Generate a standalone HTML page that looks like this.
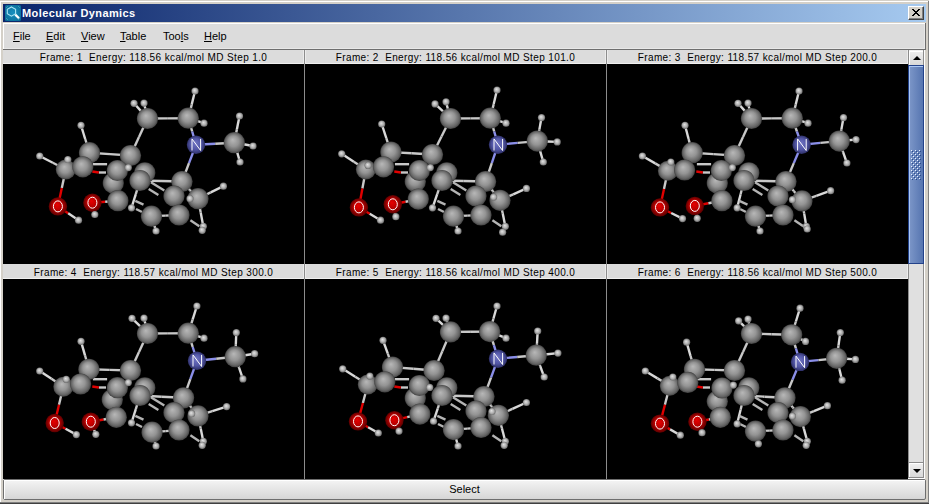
<!DOCTYPE html>
<html><head><meta charset="utf-8"><style>
html,body{margin:0;padding:0;width:929px;height:504px;overflow:hidden;position:relative;background:#d4d0c8}
svg{display:block}
</style></head><body>
<svg width="0" height="0" style="position:absolute"><defs>
<radialGradient id="gC" cx="0.5" cy="0.5" r="0.5" fx="0.42" fy="0.36">
<stop offset="0" stop-color="#b8b8b8"/><stop offset="0.5" stop-color="#949494"/><stop offset="0.85" stop-color="#646464"/><stop offset="1" stop-color="#404040"/></radialGradient>
<radialGradient id="gH" cx="0.5" cy="0.5" r="0.5" fx="0.42" fy="0.38">
<stop offset="0" stop-color="#e4e4e4"/><stop offset="0.6" stop-color="#b0b0b0"/><stop offset="1" stop-color="#6c6c6c"/></radialGradient>
<radialGradient id="gN" cx="0.5" cy="0.5" r="0.5" fx="0.45" fy="0.4">
<stop offset="0" stop-color="#7276c4"/><stop offset="0.6" stop-color="#5256a6"/><stop offset="1" stop-color="#2e3068"/></radialGradient>
<radialGradient id="gO" cx="0.5" cy="0.5" r="0.5" fx="0.45" fy="0.4">
<stop offset="0" stop-color="#e80000"/><stop offset="0.55" stop-color="#b80000"/><stop offset="1" stop-color="#5a0000"/></radialGradient>
</defs></svg>
<div style="position:absolute;left:0px;top:0px;width:929px;height:504px;background:#d4d0c8;"></div>
<div style="position:absolute;left:0px;top:1px;width:928px;height:1px;background:#fff;"></div>
<div style="position:absolute;left:0px;top:1px;width:1px;height:501px;background:#fff;"></div>
<div style="position:absolute;left:928px;top:1px;width:1px;height:503px;background:#808080;"></div>
<div style="position:absolute;left:0px;top:502px;width:929px;height:1px;background:#808080;"></div>
<div style="position:absolute;left:0px;top:503px;width:929px;height:1px;background:#404040;"></div>
<div style="position:absolute;left:3px;top:4px;width:923px;height:18px;background:linear-gradient(to right,#0a246a,#a6caf0);"></div>
<div style="position:absolute;left:22px;top:4px;height:18px;font:bold 11px 'Liberation Sans',sans-serif;letter-spacing:0.4px;line-height:18px;color:#fff;white-space:pre">Molecular Dynamics</div>
<svg style="position:absolute;left:5px;top:5px" width="16" height="16" viewBox="0 0 16 16">
<defs><radialGradient id="gI" cx="0.5" cy="0.5" r="0.6"><stop offset="0" stop-color="#1790c0"/><stop offset="1" stop-color="#0a6e98"/></radialGradient></defs>
<rect x="0" y="0" width="16" height="16" rx="1.5" fill="url(#gI)"/>
<path d="M1.5 2.5l1-1M13.5 1.5l1 1M1.5 13.5l1 1M13.5 14.5l1-1" stroke="#6cc4dc" stroke-width="0.9"/>
<path d="M6.45 1.9 L10.6 4.3 L10.6 8.8 L6.45 11.2 L2.3 8.8 L2.3 4.3 Z" fill="none" stroke="#a8e4f4" stroke-width="1.1"/>
<path d="M10.3 9.6 L14 13.3" stroke="#fff" stroke-width="2.2"/>
</svg>
<div style="position:absolute;left:908px;top:6px;width:16px;height:14px;background:#d4d0c8;box-sizing:border-box;border-top:1px solid #fff;border-left:1px solid #fff;border-right:1px solid #404040;border-bottom:1px solid #404040"></div>
<div style="position:absolute;left:909px;top:7px;width:14px;height:12px;box-sizing:border-box;border-right:1px solid #808080;border-bottom:1px solid #808080"></div>
<svg style="position:absolute;left:912px;top:9px" width="8" height="7" viewBox="0 0 8 7" shape-rendering="crispEdges" fill="#000"><rect x="0" y="0" width="1" height="1"/><rect x="1" y="0" width="1" height="1"/><rect x="6" y="0" width="1" height="1"/><rect x="7" y="0" width="1" height="1"/><rect x="1" y="1" width="1" height="1"/><rect x="2" y="1" width="1" height="1"/><rect x="5" y="1" width="1" height="1"/><rect x="6" y="1" width="1" height="1"/><rect x="2" y="2" width="1" height="1"/><rect x="3" y="2" width="1" height="1"/><rect x="4" y="2" width="1" height="1"/><rect x="5" y="2" width="1" height="1"/><rect x="3" y="3" width="1" height="1"/><rect x="4" y="3" width="1" height="1"/><rect x="2" y="4" width="1" height="1"/><rect x="3" y="4" width="1" height="1"/><rect x="4" y="4" width="1" height="1"/><rect x="5" y="4" width="1" height="1"/><rect x="1" y="5" width="1" height="1"/><rect x="2" y="5" width="1" height="1"/><rect x="5" y="5" width="1" height="1"/><rect x="6" y="5" width="1" height="1"/><rect x="0" y="6" width="1" height="1"/><rect x="1" y="6" width="1" height="1"/><rect x="6" y="6" width="1" height="1"/><rect x="7" y="6" width="1" height="1"/></svg>
<div style="position:absolute;left:3px;top:23px;width:923px;height:27px;background:#dcdcdc;"></div>
<div style="position:absolute;left:3px;top:23px;width:922px;height:1px;background:#fff;"></div>
<div style="position:absolute;left:3px;top:23px;width:1px;height:26px;background:#fff;"></div>
<div style="position:absolute;left:4px;top:48px;width:921px;height:1px;background:#e8e8e8;"></div>
<div style="position:absolute;left:924px;top:24px;width:1px;height:25px;background:#e8e8e8;"></div>
<div style="position:absolute;left:925px;top:23px;width:1px;height:27px;background:#6e6e6e;"></div>
<div style="position:absolute;left:3px;top:49px;width:923px;height:1px;background:#6e6e6e;"></div>
<div style="position:absolute;left:13px;top:30px;height:13px;font:11px 'Liberation Sans',sans-serif;line-height:13px;color:#000;white-space:pre"><u>F</u>ile</div>
<div style="position:absolute;left:46px;top:30px;height:13px;font:11px 'Liberation Sans',sans-serif;line-height:13px;color:#000;white-space:pre"><u>E</u>dit</div>
<div style="position:absolute;left:81px;top:30px;height:13px;font:11px 'Liberation Sans',sans-serif;line-height:13px;color:#000;white-space:pre"><u>V</u>iew</div>
<div style="position:absolute;left:120px;top:30px;height:13px;font:11px 'Liberation Sans',sans-serif;line-height:13px;color:#000;white-space:pre"><u>T</u>able</div>
<div style="position:absolute;left:163px;top:30px;height:13px;font:11px 'Liberation Sans',sans-serif;line-height:13px;color:#000;white-space:pre">Too<u>l</u>s</div>
<div style="position:absolute;left:204px;top:30px;height:13px;font:11px 'Liberation Sans',sans-serif;line-height:13px;color:#000;white-space:pre"><u>H</u>elp</div>
<div style="position:absolute;left:3px;top:50px;width:922px;height:450px;background:#dcdcdc;"></div>
<div style="position:absolute;left:3px;top:64px;width:301px;height:200px;background:#000;"></div>
<div style="position:absolute;left:3px;top:51px;width:301px;height:14px;text-align:center;font:10px 'Liberation Sans',sans-serif;letter-spacing:0.38px;color:#000;white-space:pre;line-height:14px">Frame: 1  Energy: 118.56 kcal/mol MD Step 1.0</div>
<svg style="position:absolute;left:3px;top:64px" width="301" height="200" viewBox="0 0 301 200" stroke-width="2.4"><line x1="144.5" y1="54.5" x2="164.9" y2="54.4" stroke="#c8c8c8"/>
<line x1="164.9" y1="54.4" x2="185.3" y2="54.2" stroke="#c8c8c8"/>
<line x1="144.5" y1="54.5" x2="137.8" y2="46.9" stroke="#c8c8c8"/>
<line x1="137.8" y1="46.9" x2="131.0" y2="39.3" stroke="#d8d8d8"/>
<line x1="144.5" y1="54.5" x2="142.8" y2="46.8" stroke="#c8c8c8"/>
<line x1="142.8" y1="46.8" x2="141.0" y2="39.1" stroke="#d8d8d8"/>
<line x1="185.3" y1="54.2" x2="188.7" y2="40.6" stroke="#c8c8c8"/>
<line x1="188.7" y1="40.6" x2="192.0" y2="27.0" stroke="#d8d8d8"/>
<line x1="185.3" y1="54.2" x2="193.2" y2="56.7" stroke="#c8c8c8"/>
<line x1="193.2" y1="56.7" x2="201.0" y2="59.2" stroke="#d8d8d8"/>
<line x1="185.3" y1="54.2" x2="189.2" y2="67.5" stroke="#c8c8c8"/>
<line x1="189.2" y1="67.5" x2="193.0" y2="80.7" stroke="#8a8ee8"/>
<line x1="193.0" y1="80.7" x2="212.2" y2="79.7" stroke="#8a8ee8"/>
<line x1="212.2" y1="79.7" x2="231.3" y2="78.7" stroke="#c8c8c8"/>
<line x1="231.3" y1="78.7" x2="233.9" y2="65.3" stroke="#c8c8c8"/>
<line x1="233.9" y1="65.3" x2="236.5" y2="52.0" stroke="#d8d8d8"/>
<line x1="231.3" y1="78.7" x2="240.7" y2="80.3" stroke="#c8c8c8"/>
<line x1="240.7" y1="80.3" x2="250.0" y2="82.0" stroke="#d8d8d8"/>
<line x1="231.3" y1="78.7" x2="234.2" y2="88.3" stroke="#c8c8c8"/>
<line x1="234.2" y1="88.3" x2="237.0" y2="98.0" stroke="#d8d8d8"/>
<line x1="144.5" y1="54.5" x2="136.0" y2="73.0" stroke="#c8c8c8"/>
<line x1="136.0" y1="73.0" x2="127.5" y2="91.5" stroke="#c8c8c8"/>
<line x1="193.0" y1="80.7" x2="186.0" y2="99.1" stroke="#8a8ee8"/>
<line x1="186.0" y1="99.1" x2="179.0" y2="117.5" stroke="#c8c8c8"/>
<line x1="179.0" y1="117.5" x2="158.0" y2="117.0" stroke="#c8c8c8"/>
<line x1="158.0" y1="117.0" x2="137.0" y2="116.5" stroke="#c8c8c8"/>
<line x1="179.0" y1="117.5" x2="187.0" y2="126.1" stroke="#c8c8c8"/>
<line x1="187.0" y1="126.1" x2="195.0" y2="134.7" stroke="#c8c8c8"/>
<line x1="195.0" y1="134.7" x2="207.7" y2="128.4" stroke="#c8c8c8"/>
<line x1="207.7" y1="128.4" x2="220.4" y2="122.2" stroke="#d8d8d8"/>
<line x1="195.0" y1="134.7" x2="197.7" y2="148.5" stroke="#c8c8c8"/>
<line x1="197.7" y1="148.5" x2="200.3" y2="162.3" stroke="#d8d8d8"/>
<line x1="148.5" y1="152.2" x2="162.2" y2="151.6" stroke="#c8c8c8"/>
<line x1="162.2" y1="151.6" x2="176.0" y2="151.0" stroke="#c8c8c8"/>
<line x1="148.5" y1="152.2" x2="150.8" y2="159.6" stroke="#c8c8c8"/>
<line x1="150.8" y1="159.6" x2="153.0" y2="167.0" stroke="#d8d8d8"/>
<line x1="86.5" y1="88.7" x2="82.2" y2="75.0" stroke="#c8c8c8"/>
<line x1="82.2" y1="75.0" x2="78.0" y2="61.3" stroke="#d8d8d8"/>
<line x1="86.5" y1="88.7" x2="107.0" y2="90.1" stroke="#c8c8c8"/>
<line x1="107.0" y1="90.1" x2="127.5" y2="91.5" stroke="#c8c8c8"/>
<line x1="62.8" y1="105.5" x2="49.8" y2="98.8" stroke="#c8c8c8"/>
<line x1="49.8" y1="98.8" x2="36.7" y2="92.0" stroke="#d8d8d8"/>
<line x1="62.8" y1="105.5" x2="58.8" y2="124.0" stroke="#c8c8c8"/>
<line x1="58.8" y1="124.0" x2="54.9" y2="142.4" stroke="#e00000"/>
<line x1="54.9" y1="142.4" x2="65.2" y2="149.3" stroke="#e00000"/>
<line x1="65.2" y1="149.3" x2="75.5" y2="156.2" stroke="#d8d8d8"/>
<line x1="89.4" y1="138.7" x2="102.2" y2="137.7" stroke="#e00000"/>
<line x1="102.2" y1="137.7" x2="114.9" y2="136.7" stroke="#c8c8c8"/>
<line x1="89.4" y1="138.7" x2="90.6" y2="144.6" stroke="#e00000"/>
<line x1="90.6" y1="144.6" x2="91.8" y2="150.5" stroke="#d8d8d8"/>
<line x1="62.8" y1="105.5" x2="71.3" y2="104.2" stroke="#c8c8c8"/>
<line x1="71.3" y1="104.2" x2="79.8" y2="102.8" stroke="#c8c8c8"/>
<line x1="128.5" y1="143.8" x2="132.8" y2="130.2" stroke="#d8d8d8"/>
<line x1="132.8" y1="130.2" x2="137.0" y2="116.5" stroke="#c8c8c8"/>
<line x1="195.0" y1="134.7" x2="191.0" y2="134.7" stroke="#c8c8c8"/>
<line x1="191.0" y1="134.7" x2="187.0" y2="134.7" stroke="#d8d8d8"/>
<line x1="147.9" y1="118.3" x2="161.3" y2="126.5" stroke="#b4b4b4"/>
<line x1="145.7" y1="125.0" x2="155.4" y2="131.0" stroke="#b4b4b4"/>
<line x1="132.3" y1="136.9" x2="140.5" y2="140.6" stroke="#b4b4b4"/>
<line x1="133.0" y1="145.0" x2="139.0" y2="148.0" stroke="#b4b4b4"/>
<line x1="187.4" y1="156.3" x2="196.3" y2="162.2" stroke="#b4b4b4"/>
<line x1="89.9" y1="100.2" x2="104.1" y2="100.2" stroke="#c8c8c8"/>
<line x1="95.8" y1="108.5" x2="103.0" y2="108.5" stroke="#c8c8c8"/>
<line x1="89.3" y1="107.5" x2="95.8" y2="108.5" stroke="#e00000"/>
<circle cx="144.5" cy="54.5" r="10.6" fill="url(#gC)"/>
<circle cx="185.3" cy="54.2" r="10.6" fill="url(#gC)"/>
<circle cx="231.3" cy="78.7" r="10.6" fill="url(#gC)"/>
<circle cx="193.0" cy="80.7" r="9.2" fill="url(#gN)"/>
<path d="M189.0 86.5V74.9L197.6 86.5V74.9" fill="none" stroke="#fff" stroke-width="1"/>
<circle cx="86.5" cy="88.7" r="10.6" fill="url(#gC)"/>
<circle cx="127.5" cy="91.5" r="10.6" fill="url(#gC)"/>
<circle cx="131.0" cy="39.3" r="3.6" fill="url(#gH)"/>
<circle cx="141.0" cy="39.1" r="3.6" fill="url(#gH)"/>
<circle cx="192.0" cy="27.0" r="3.6" fill="url(#gH)"/>
<circle cx="201.0" cy="59.2" r="3.6" fill="url(#gH)"/>
<circle cx="236.5" cy="52.0" r="3.6" fill="url(#gH)"/>
<circle cx="250.0" cy="82.0" r="3.6" fill="url(#gH)"/>
<circle cx="237.0" cy="98.0" r="3.6" fill="url(#gH)"/>
<circle cx="78.0" cy="61.3" r="3.6" fill="url(#gH)"/>
<circle cx="62.8" cy="105.5" r="10" fill="url(#gC)"/>
<circle cx="79.8" cy="102.8" r="10.6" fill="url(#gC)"/>
<circle cx="36.7" cy="92.0" r="3.6" fill="url(#gH)"/>
<circle cx="64.8" cy="95.5" r="3.6" fill="url(#gH)"/>
<circle cx="141.8" cy="108.8" r="10.6" fill="url(#gC)"/>
<circle cx="110.3" cy="119.0" r="10.6" fill="url(#gC)"/>
<circle cx="114.4" cy="106.5" r="10.6" fill="url(#gC)"/>
<circle cx="125.3" cy="103.6" r="3.6" fill="url(#gH)"/>
<circle cx="137.0" cy="116.5" r="10.6" fill="url(#gC)"/>
<circle cx="195.0" cy="134.7" r="10.6" fill="url(#gC)"/>
<circle cx="179.0" cy="117.5" r="10.6" fill="url(#gC)"/>
<circle cx="171.0" cy="132.0" r="10.6" fill="url(#gC)"/>
<circle cx="187.0" cy="134.7" r="3.6" fill="url(#gH)"/>
<circle cx="220.4" cy="122.2" r="3.6" fill="url(#gH)"/>
<circle cx="114.9" cy="136.7" r="10.6" fill="url(#gC)"/>
<circle cx="54.9" cy="142.4" r="9.2" fill="url(#gO)"/>
<ellipse cx="54.9" cy="142.4" rx="4.5" ry="5.5" fill="none" stroke="#fff" stroke-width="1"/>
<circle cx="89.4" cy="138.7" r="9.2" fill="url(#gO)"/>
<ellipse cx="89.4" cy="138.7" rx="4.5" ry="5.5" fill="none" stroke="#fff" stroke-width="1"/>
<circle cx="75.5" cy="156.2" r="3.6" fill="url(#gH)"/>
<circle cx="91.8" cy="150.5" r="3.6" fill="url(#gH)"/>
<circle cx="128.5" cy="143.8" r="3.6" fill="url(#gH)"/>
<circle cx="148.5" cy="152.2" r="10.6" fill="url(#gC)"/>
<circle cx="176.0" cy="151.0" r="10.6" fill="url(#gC)"/>
<circle cx="153.0" cy="167.0" r="3.6" fill="url(#gH)"/>
<circle cx="200.3" cy="162.3" r="3.6" fill="url(#gH)"/>
<circle cx="199.2" cy="166.3" r="3.6" fill="url(#gH)"/></svg>
<div style="position:absolute;left:305px;top:64px;width:301px;height:200px;background:#000;"></div>
<div style="position:absolute;left:305px;top:51px;width:301px;height:14px;text-align:center;font:10px 'Liberation Sans',sans-serif;letter-spacing:0.38px;color:#000;white-space:pre;line-height:14px">Frame: 2  Energy: 118.56 kcal/mol MD Step 101.0</div>
<svg style="position:absolute;left:305px;top:64px" width="301" height="200" viewBox="0 0 301 200" stroke-width="2.4"><line x1="145.5" y1="54.5" x2="165.4" y2="54.4" stroke="#c8c8c8"/>
<line x1="165.4" y1="54.4" x2="185.3" y2="54.2" stroke="#c8c8c8"/>
<line x1="145.5" y1="54.5" x2="137.8" y2="47.2" stroke="#c8c8c8"/>
<line x1="137.8" y1="47.2" x2="130.0" y2="39.9" stroke="#d8d8d8"/>
<line x1="145.5" y1="54.5" x2="143.2" y2="46.2" stroke="#c8c8c8"/>
<line x1="143.2" y1="46.2" x2="141.0" y2="37.8" stroke="#d8d8d8"/>
<line x1="185.3" y1="54.2" x2="188.7" y2="40.1" stroke="#c8c8c8"/>
<line x1="188.7" y1="40.1" x2="192.0" y2="26.0" stroke="#d8d8d8"/>
<line x1="185.3" y1="54.2" x2="193.2" y2="56.7" stroke="#c8c8c8"/>
<line x1="193.2" y1="56.7" x2="201.0" y2="59.2" stroke="#d8d8d8"/>
<line x1="185.3" y1="54.2" x2="189.2" y2="67.5" stroke="#c8c8c8"/>
<line x1="189.2" y1="67.5" x2="193.0" y2="80.7" stroke="#8a8ee8"/>
<line x1="193.0" y1="80.7" x2="212.7" y2="78.9" stroke="#8a8ee8"/>
<line x1="212.7" y1="78.9" x2="232.3" y2="77.1" stroke="#c8c8c8"/>
<line x1="232.3" y1="77.1" x2="234.4" y2="65.4" stroke="#c8c8c8"/>
<line x1="234.4" y1="65.4" x2="236.5" y2="53.6" stroke="#d8d8d8"/>
<line x1="232.3" y1="77.1" x2="242.2" y2="77.5" stroke="#c8c8c8"/>
<line x1="242.2" y1="77.5" x2="252.2" y2="77.9" stroke="#d8d8d8"/>
<line x1="232.3" y1="77.1" x2="235.3" y2="87.6" stroke="#c8c8c8"/>
<line x1="235.3" y1="87.6" x2="238.3" y2="98.0" stroke="#d8d8d8"/>
<line x1="145.5" y1="54.5" x2="136.5" y2="72.5" stroke="#c8c8c8"/>
<line x1="136.5" y1="72.5" x2="127.5" y2="90.5" stroke="#c8c8c8"/>
<line x1="193.0" y1="80.7" x2="186.8" y2="99.1" stroke="#8a8ee8"/>
<line x1="186.8" y1="99.1" x2="180.6" y2="117.5" stroke="#c8c8c8"/>
<line x1="180.6" y1="117.5" x2="158.8" y2="117.0" stroke="#c8c8c8"/>
<line x1="158.8" y1="117.0" x2="137.0" y2="116.5" stroke="#c8c8c8"/>
<line x1="180.6" y1="117.5" x2="187.8" y2="126.9" stroke="#c8c8c8"/>
<line x1="187.8" y1="126.9" x2="195.0" y2="136.3" stroke="#c8c8c8"/>
<line x1="195.0" y1="136.3" x2="208.2" y2="130.3" stroke="#c8c8c8"/>
<line x1="208.2" y1="130.3" x2="221.4" y2="124.4" stroke="#d8d8d8"/>
<line x1="195.0" y1="136.3" x2="197.7" y2="149.3" stroke="#c8c8c8"/>
<line x1="197.7" y1="149.3" x2="200.3" y2="162.3" stroke="#d8d8d8"/>
<line x1="148.5" y1="152.2" x2="162.2" y2="151.6" stroke="#c8c8c8"/>
<line x1="162.2" y1="151.6" x2="176.0" y2="151.0" stroke="#c8c8c8"/>
<line x1="148.5" y1="152.2" x2="150.8" y2="159.6" stroke="#c8c8c8"/>
<line x1="150.8" y1="159.6" x2="153.0" y2="167.0" stroke="#d8d8d8"/>
<line x1="85.9" y1="88.1" x2="81.3" y2="74.1" stroke="#c8c8c8"/>
<line x1="81.3" y1="74.1" x2="76.7" y2="60.0" stroke="#d8d8d8"/>
<line x1="85.9" y1="88.1" x2="106.7" y2="89.3" stroke="#c8c8c8"/>
<line x1="106.7" y1="89.3" x2="127.5" y2="90.5" stroke="#c8c8c8"/>
<line x1="60.9" y1="105.5" x2="48.8" y2="97.7" stroke="#c8c8c8"/>
<line x1="48.8" y1="97.7" x2="36.7" y2="89.8" stroke="#d8d8d8"/>
<line x1="60.9" y1="105.5" x2="57.4" y2="124.5" stroke="#c8c8c8"/>
<line x1="57.4" y1="124.5" x2="53.9" y2="143.4" stroke="#e00000"/>
<line x1="53.9" y1="143.4" x2="64.7" y2="149.8" stroke="#e00000"/>
<line x1="64.7" y1="149.8" x2="75.5" y2="156.2" stroke="#d8d8d8"/>
<line x1="87.8" y1="140.3" x2="100.6" y2="137.7" stroke="#e00000"/>
<line x1="100.6" y1="137.7" x2="113.3" y2="135.1" stroke="#c8c8c8"/>
<line x1="87.8" y1="140.3" x2="89.3" y2="146.5" stroke="#e00000"/>
<line x1="89.3" y1="146.5" x2="90.8" y2="152.7" stroke="#d8d8d8"/>
<line x1="60.9" y1="105.5" x2="69.7" y2="104.2" stroke="#c8c8c8"/>
<line x1="69.7" y1="104.2" x2="78.5" y2="102.8" stroke="#c8c8c8"/>
<line x1="127.5" y1="143.8" x2="132.2" y2="130.2" stroke="#d8d8d8"/>
<line x1="132.2" y1="130.2" x2="137.0" y2="116.5" stroke="#c8c8c8"/>
<line x1="195.0" y1="136.3" x2="191.8" y2="134.7" stroke="#c8c8c8"/>
<line x1="191.8" y1="134.7" x2="188.6" y2="133.1" stroke="#d8d8d8"/>
<line x1="147.9" y1="118.3" x2="161.3" y2="126.5" stroke="#b4b4b4"/>
<line x1="145.7" y1="125.0" x2="155.4" y2="131.0" stroke="#b4b4b4"/>
<line x1="132.3" y1="136.9" x2="140.5" y2="140.6" stroke="#b4b4b4"/>
<line x1="133.0" y1="145.0" x2="139.0" y2="148.0" stroke="#b4b4b4"/>
<line x1="187.4" y1="156.3" x2="196.3" y2="162.2" stroke="#b4b4b4"/>
<line x1="89.9" y1="100.2" x2="104.1" y2="100.2" stroke="#c8c8c8"/>
<line x1="95.8" y1="108.5" x2="103.0" y2="108.5" stroke="#c8c8c8"/>
<line x1="89.3" y1="107.5" x2="95.8" y2="108.5" stroke="#e00000"/>
<circle cx="145.5" cy="54.5" r="10.6" fill="url(#gC)"/>
<circle cx="185.3" cy="54.2" r="10.6" fill="url(#gC)"/>
<circle cx="232.3" cy="77.1" r="10.6" fill="url(#gC)"/>
<circle cx="193.0" cy="80.7" r="9.2" fill="url(#gN)"/>
<path d="M189.0 86.5V74.9L197.6 86.5V74.9" fill="none" stroke="#fff" stroke-width="1"/>
<circle cx="85.9" cy="88.1" r="10.6" fill="url(#gC)"/>
<circle cx="127.5" cy="90.5" r="10.6" fill="url(#gC)"/>
<circle cx="130.0" cy="39.9" r="3.6" fill="url(#gH)"/>
<circle cx="141.0" cy="37.8" r="3.6" fill="url(#gH)"/>
<circle cx="192.0" cy="26.0" r="3.6" fill="url(#gH)"/>
<circle cx="201.0" cy="59.2" r="3.6" fill="url(#gH)"/>
<circle cx="236.5" cy="53.6" r="3.6" fill="url(#gH)"/>
<circle cx="252.2" cy="77.9" r="3.6" fill="url(#gH)"/>
<circle cx="238.3" cy="98.0" r="3.6" fill="url(#gH)"/>
<circle cx="76.7" cy="60.0" r="3.6" fill="url(#gH)"/>
<circle cx="60.9" cy="105.5" r="10" fill="url(#gC)"/>
<circle cx="78.5" cy="102.8" r="10.6" fill="url(#gC)"/>
<circle cx="36.7" cy="89.8" r="3.6" fill="url(#gH)"/>
<circle cx="63.1" cy="101.4" r="3.6" fill="url(#gH)"/>
<circle cx="141.8" cy="108.8" r="10.6" fill="url(#gC)"/>
<circle cx="110.3" cy="117.4" r="10.6" fill="url(#gC)"/>
<circle cx="114.4" cy="106.5" r="10.6" fill="url(#gC)"/>
<circle cx="125.3" cy="103.6" r="3.6" fill="url(#gH)"/>
<circle cx="137.0" cy="116.5" r="10.6" fill="url(#gC)"/>
<circle cx="195.0" cy="136.3" r="10.6" fill="url(#gC)"/>
<circle cx="180.6" cy="117.5" r="10.6" fill="url(#gC)"/>
<circle cx="171.0" cy="132.0" r="10.6" fill="url(#gC)"/>
<circle cx="188.6" cy="133.1" r="3.6" fill="url(#gH)"/>
<circle cx="221.4" cy="124.4" r="3.6" fill="url(#gH)"/>
<circle cx="113.3" cy="135.1" r="10.6" fill="url(#gC)"/>
<circle cx="53.9" cy="143.4" r="9.2" fill="url(#gO)"/>
<ellipse cx="53.9" cy="143.4" rx="4.5" ry="5.5" fill="none" stroke="#fff" stroke-width="1"/>
<circle cx="87.8" cy="140.3" r="9.2" fill="url(#gO)"/>
<ellipse cx="87.8" cy="140.3" rx="4.5" ry="5.5" fill="none" stroke="#fff" stroke-width="1"/>
<circle cx="75.5" cy="156.2" r="3.6" fill="url(#gH)"/>
<circle cx="90.8" cy="152.7" r="3.6" fill="url(#gH)"/>
<circle cx="127.5" cy="143.8" r="3.6" fill="url(#gH)"/>
<circle cx="148.5" cy="152.2" r="10.6" fill="url(#gC)"/>
<circle cx="176.0" cy="151.0" r="10.6" fill="url(#gC)"/>
<circle cx="153.0" cy="167.0" r="3.6" fill="url(#gH)"/>
<circle cx="200.3" cy="162.3" r="3.6" fill="url(#gH)"/>
<circle cx="197.6" cy="168.2" r="3.6" fill="url(#gH)"/></svg>
<div style="position:absolute;left:607px;top:64px;width:301px;height:200px;background:#000;"></div>
<div style="position:absolute;left:607px;top:51px;width:301px;height:14px;text-align:center;font:10px 'Liberation Sans',sans-serif;letter-spacing:0.38px;color:#000;white-space:pre;line-height:14px">Frame: 3  Energy: 118.57 kcal/mol MD Step 200.0</div>
<svg style="position:absolute;left:607px;top:64px" width="301" height="200" viewBox="0 0 301 200" stroke-width="2.4"><line x1="144.5" y1="54.5" x2="164.9" y2="54.4" stroke="#c8c8c8"/>
<line x1="164.9" y1="54.4" x2="185.3" y2="54.2" stroke="#c8c8c8"/>
<line x1="144.5" y1="54.5" x2="137.8" y2="46.9" stroke="#c8c8c8"/>
<line x1="137.8" y1="46.9" x2="131.0" y2="39.3" stroke="#d8d8d8"/>
<line x1="144.5" y1="54.5" x2="142.8" y2="46.8" stroke="#c8c8c8"/>
<line x1="142.8" y1="46.8" x2="141.0" y2="39.1" stroke="#d8d8d8"/>
<line x1="185.3" y1="54.2" x2="188.7" y2="40.6" stroke="#c8c8c8"/>
<line x1="188.7" y1="40.6" x2="192.0" y2="27.0" stroke="#d8d8d8"/>
<line x1="185.3" y1="54.2" x2="193.2" y2="56.7" stroke="#c8c8c8"/>
<line x1="193.2" y1="56.7" x2="201.0" y2="59.2" stroke="#d8d8d8"/>
<line x1="185.3" y1="54.2" x2="189.9" y2="67.5" stroke="#c8c8c8"/>
<line x1="189.9" y1="67.5" x2="194.6" y2="80.7" stroke="#8a8ee8"/>
<line x1="194.6" y1="80.7" x2="213.4" y2="78.9" stroke="#8a8ee8"/>
<line x1="213.4" y1="78.9" x2="232.3" y2="77.1" stroke="#c8c8c8"/>
<line x1="232.3" y1="77.1" x2="234.4" y2="65.4" stroke="#c8c8c8"/>
<line x1="234.4" y1="65.4" x2="236.5" y2="53.6" stroke="#d8d8d8"/>
<line x1="232.3" y1="77.1" x2="240.7" y2="76.3" stroke="#c8c8c8"/>
<line x1="240.7" y1="76.3" x2="249.0" y2="75.6" stroke="#d8d8d8"/>
<line x1="232.3" y1="77.1" x2="236.1" y2="88.1" stroke="#c8c8c8"/>
<line x1="236.1" y1="88.1" x2="239.9" y2="99.0" stroke="#d8d8d8"/>
<line x1="144.5" y1="54.5" x2="136.0" y2="73.0" stroke="#c8c8c8"/>
<line x1="136.0" y1="73.0" x2="127.5" y2="91.5" stroke="#c8c8c8"/>
<line x1="194.6" y1="80.7" x2="186.8" y2="99.1" stroke="#8a8ee8"/>
<line x1="186.8" y1="99.1" x2="179.0" y2="117.5" stroke="#c8c8c8"/>
<line x1="179.0" y1="117.5" x2="158.0" y2="117.0" stroke="#c8c8c8"/>
<line x1="158.0" y1="117.0" x2="137.0" y2="116.5" stroke="#c8c8c8"/>
<line x1="179.0" y1="117.5" x2="187.0" y2="127.2" stroke="#c8c8c8"/>
<line x1="187.0" y1="127.2" x2="195.0" y2="136.9" stroke="#c8c8c8"/>
<line x1="195.0" y1="136.9" x2="209.3" y2="131.8" stroke="#c8c8c8"/>
<line x1="209.3" y1="131.8" x2="223.6" y2="126.7" stroke="#d8d8d8"/>
<line x1="195.0" y1="136.9" x2="197.2" y2="149.6" stroke="#c8c8c8"/>
<line x1="197.2" y1="149.6" x2="199.3" y2="162.3" stroke="#d8d8d8"/>
<line x1="148.5" y1="152.2" x2="162.2" y2="151.6" stroke="#c8c8c8"/>
<line x1="162.2" y1="151.6" x2="176.0" y2="151.0" stroke="#c8c8c8"/>
<line x1="148.5" y1="152.2" x2="150.8" y2="159.6" stroke="#c8c8c8"/>
<line x1="150.8" y1="159.6" x2="153.0" y2="167.0" stroke="#d8d8d8"/>
<line x1="85.2" y1="88.7" x2="81.6" y2="75.0" stroke="#c8c8c8"/>
<line x1="81.6" y1="75.0" x2="78.0" y2="61.3" stroke="#d8d8d8"/>
<line x1="85.2" y1="88.7" x2="106.3" y2="90.1" stroke="#c8c8c8"/>
<line x1="106.3" y1="90.1" x2="127.5" y2="91.5" stroke="#c8c8c8"/>
<line x1="60.9" y1="106.8" x2="48.2" y2="99.4" stroke="#c8c8c8"/>
<line x1="48.2" y1="99.4" x2="35.4" y2="92.0" stroke="#d8d8d8"/>
<line x1="60.9" y1="106.8" x2="57.0" y2="125.1" stroke="#c8c8c8"/>
<line x1="57.0" y1="125.1" x2="53.0" y2="143.4" stroke="#e00000"/>
<line x1="53.0" y1="143.4" x2="64.2" y2="149.0" stroke="#e00000"/>
<line x1="64.2" y1="149.0" x2="75.5" y2="154.6" stroke="#d8d8d8"/>
<line x1="87.8" y1="141.9" x2="101.4" y2="139.3" stroke="#e00000"/>
<line x1="101.4" y1="139.3" x2="114.9" y2="136.7" stroke="#c8c8c8"/>
<line x1="87.8" y1="141.9" x2="89.0" y2="148.1" stroke="#e00000"/>
<line x1="89.0" y1="148.1" x2="90.2" y2="154.3" stroke="#d8d8d8"/>
<line x1="60.9" y1="106.8" x2="69.2" y2="106.4" stroke="#c8c8c8"/>
<line x1="69.2" y1="106.4" x2="77.6" y2="106.0" stroke="#c8c8c8"/>
<line x1="130.1" y1="143.8" x2="133.6" y2="130.2" stroke="#d8d8d8"/>
<line x1="133.6" y1="130.2" x2="137.0" y2="116.5" stroke="#c8c8c8"/>
<line x1="195.0" y1="136.9" x2="190.2" y2="136.3" stroke="#c8c8c8"/>
<line x1="190.2" y1="136.3" x2="185.4" y2="135.7" stroke="#d8d8d8"/>
<line x1="147.9" y1="118.3" x2="161.3" y2="126.5" stroke="#b4b4b4"/>
<line x1="145.7" y1="125.0" x2="155.4" y2="131.0" stroke="#b4b4b4"/>
<line x1="132.3" y1="136.9" x2="140.5" y2="140.6" stroke="#b4b4b4"/>
<line x1="133.0" y1="145.0" x2="139.0" y2="148.0" stroke="#b4b4b4"/>
<line x1="187.4" y1="156.3" x2="196.3" y2="162.2" stroke="#b4b4b4"/>
<line x1="89.9" y1="100.2" x2="104.1" y2="100.2" stroke="#c8c8c8"/>
<line x1="95.8" y1="108.5" x2="103.0" y2="108.5" stroke="#c8c8c8"/>
<line x1="89.3" y1="107.5" x2="95.8" y2="108.5" stroke="#e00000"/>
<circle cx="144.5" cy="54.5" r="10.6" fill="url(#gC)"/>
<circle cx="185.3" cy="54.2" r="10.6" fill="url(#gC)"/>
<circle cx="232.3" cy="77.1" r="10.6" fill="url(#gC)"/>
<circle cx="194.6" cy="80.7" r="9.2" fill="url(#gN)"/>
<path d="M190.6 86.5V74.9L199.2 86.5V74.9" fill="none" stroke="#fff" stroke-width="1"/>
<circle cx="85.2" cy="88.7" r="10.6" fill="url(#gC)"/>
<circle cx="127.5" cy="91.5" r="10.6" fill="url(#gC)"/>
<circle cx="131.0" cy="39.3" r="3.6" fill="url(#gH)"/>
<circle cx="141.0" cy="39.1" r="3.6" fill="url(#gH)"/>
<circle cx="192.0" cy="27.0" r="3.6" fill="url(#gH)"/>
<circle cx="201.0" cy="59.2" r="3.6" fill="url(#gH)"/>
<circle cx="236.5" cy="53.6" r="3.6" fill="url(#gH)"/>
<circle cx="249.0" cy="75.6" r="3.6" fill="url(#gH)"/>
<circle cx="239.9" cy="99.0" r="3.6" fill="url(#gH)"/>
<circle cx="78.0" cy="61.3" r="3.6" fill="url(#gH)"/>
<circle cx="60.9" cy="106.8" r="10" fill="url(#gC)"/>
<circle cx="77.6" cy="106.0" r="10.6" fill="url(#gC)"/>
<circle cx="35.4" cy="92.0" r="3.6" fill="url(#gH)"/>
<circle cx="63.8" cy="98.0" r="3.6" fill="url(#gH)"/>
<circle cx="141.8" cy="108.8" r="10.6" fill="url(#gC)"/>
<circle cx="110.3" cy="119.0" r="10.6" fill="url(#gC)"/>
<circle cx="114.4" cy="106.5" r="10.6" fill="url(#gC)"/>
<circle cx="125.3" cy="103.6" r="3.6" fill="url(#gH)"/>
<circle cx="137.0" cy="116.5" r="10.6" fill="url(#gC)"/>
<circle cx="195.0" cy="136.9" r="10.6" fill="url(#gC)"/>
<circle cx="179.0" cy="117.5" r="10.6" fill="url(#gC)"/>
<circle cx="171.0" cy="132.0" r="10.6" fill="url(#gC)"/>
<circle cx="185.4" cy="135.7" r="3.6" fill="url(#gH)"/>
<circle cx="223.6" cy="126.7" r="3.6" fill="url(#gH)"/>
<circle cx="114.9" cy="136.7" r="10.6" fill="url(#gC)"/>
<circle cx="53.0" cy="143.4" r="9.2" fill="url(#gO)"/>
<ellipse cx="53.0" cy="143.4" rx="4.5" ry="5.5" fill="none" stroke="#fff" stroke-width="1"/>
<circle cx="87.8" cy="141.9" r="9.2" fill="url(#gO)"/>
<ellipse cx="87.8" cy="141.9" rx="4.5" ry="5.5" fill="none" stroke="#fff" stroke-width="1"/>
<circle cx="75.5" cy="154.6" r="3.6" fill="url(#gH)"/>
<circle cx="90.2" cy="154.3" r="3.6" fill="url(#gH)"/>
<circle cx="130.1" cy="143.8" r="3.6" fill="url(#gH)"/>
<circle cx="148.5" cy="152.2" r="10.6" fill="url(#gC)"/>
<circle cx="176.0" cy="151.0" r="10.6" fill="url(#gC)"/>
<circle cx="153.0" cy="167.0" r="3.6" fill="url(#gH)"/>
<circle cx="199.3" cy="162.3" r="3.6" fill="url(#gH)"/>
<circle cx="200.2" cy="165.0" r="3.6" fill="url(#gH)"/></svg>
<div style="position:absolute;left:3px;top:279px;width:301px;height:200px;background:#000;"></div>
<div style="position:absolute;left:3px;top:265px;width:301px;height:15px;text-align:center;font:10px 'Liberation Sans',sans-serif;letter-spacing:0.38px;color:#000;white-space:pre;line-height:15px">Frame: 4  Energy: 118.57 kcal/mol MD Step 300.0</div>
<svg style="position:absolute;left:3px;top:279px" width="301" height="200" viewBox="0 0 301 200" stroke-width="2.4"><line x1="144.5" y1="54.5" x2="164.9" y2="54.4" stroke="#c8c8c8"/>
<line x1="164.9" y1="54.4" x2="185.3" y2="54.2" stroke="#c8c8c8"/>
<line x1="144.5" y1="54.5" x2="136.8" y2="46.9" stroke="#c8c8c8"/>
<line x1="136.8" y1="46.9" x2="129.0" y2="39.3" stroke="#d8d8d8"/>
<line x1="144.5" y1="54.5" x2="142.8" y2="46.8" stroke="#c8c8c8"/>
<line x1="142.8" y1="46.8" x2="141.0" y2="39.1" stroke="#d8d8d8"/>
<line x1="185.3" y1="54.2" x2="189.6" y2="40.6" stroke="#c8c8c8"/>
<line x1="189.6" y1="40.6" x2="193.9" y2="27.0" stroke="#d8d8d8"/>
<line x1="185.3" y1="54.2" x2="193.2" y2="56.7" stroke="#c8c8c8"/>
<line x1="193.2" y1="56.7" x2="201.0" y2="59.2" stroke="#d8d8d8"/>
<line x1="185.3" y1="54.2" x2="189.7" y2="68.0" stroke="#c8c8c8"/>
<line x1="189.7" y1="68.0" x2="194.0" y2="81.7" stroke="#8a8ee8"/>
<line x1="194.0" y1="81.7" x2="213.2" y2="79.7" stroke="#8a8ee8"/>
<line x1="213.2" y1="79.7" x2="232.3" y2="77.7" stroke="#c8c8c8"/>
<line x1="232.3" y1="77.7" x2="232.8" y2="65.7" stroke="#c8c8c8"/>
<line x1="232.8" y1="65.7" x2="233.3" y2="53.6" stroke="#d8d8d8"/>
<line x1="232.3" y1="77.7" x2="241.9" y2="76.2" stroke="#c8c8c8"/>
<line x1="241.9" y1="76.2" x2="251.6" y2="74.7" stroke="#d8d8d8"/>
<line x1="232.3" y1="77.7" x2="236.1" y2="88.8" stroke="#c8c8c8"/>
<line x1="236.1" y1="88.8" x2="239.9" y2="99.9" stroke="#d8d8d8"/>
<line x1="144.5" y1="54.5" x2="136.0" y2="73.0" stroke="#c8c8c8"/>
<line x1="136.0" y1="73.0" x2="127.5" y2="91.5" stroke="#c8c8c8"/>
<line x1="194.0" y1="81.7" x2="187.3" y2="100.2" stroke="#8a8ee8"/>
<line x1="187.3" y1="100.2" x2="180.6" y2="118.8" stroke="#c8c8c8"/>
<line x1="180.6" y1="118.8" x2="158.8" y2="117.7" stroke="#c8c8c8"/>
<line x1="158.8" y1="117.7" x2="137.0" y2="116.5" stroke="#c8c8c8"/>
<line x1="180.6" y1="118.8" x2="187.8" y2="127.8" stroke="#c8c8c8"/>
<line x1="187.8" y1="127.8" x2="195.0" y2="136.9" stroke="#c8c8c8"/>
<line x1="195.0" y1="136.9" x2="209.3" y2="132.2" stroke="#c8c8c8"/>
<line x1="209.3" y1="132.2" x2="223.6" y2="127.6" stroke="#d8d8d8"/>
<line x1="195.0" y1="136.9" x2="197.7" y2="149.6" stroke="#c8c8c8"/>
<line x1="197.7" y1="149.6" x2="200.3" y2="162.3" stroke="#d8d8d8"/>
<line x1="149.1" y1="153.2" x2="162.6" y2="152.1" stroke="#c8c8c8"/>
<line x1="162.6" y1="152.1" x2="176.0" y2="151.0" stroke="#c8c8c8"/>
<line x1="149.1" y1="153.2" x2="151.1" y2="160.1" stroke="#c8c8c8"/>
<line x1="151.1" y1="160.1" x2="153.0" y2="167.0" stroke="#d8d8d8"/>
<line x1="85.9" y1="90.3" x2="82.0" y2="76.3" stroke="#c8c8c8"/>
<line x1="82.0" y1="76.3" x2="78.0" y2="62.3" stroke="#d8d8d8"/>
<line x1="85.9" y1="90.3" x2="106.7" y2="90.9" stroke="#c8c8c8"/>
<line x1="106.7" y1="90.9" x2="127.5" y2="91.5" stroke="#c8c8c8"/>
<line x1="60.3" y1="107.7" x2="48.5" y2="99.8" stroke="#c8c8c8"/>
<line x1="48.5" y1="99.8" x2="36.7" y2="92.0" stroke="#d8d8d8"/>
<line x1="60.3" y1="107.7" x2="56.0" y2="125.8" stroke="#c8c8c8"/>
<line x1="56.0" y1="125.8" x2="51.7" y2="144.0" stroke="#e00000"/>
<line x1="51.7" y1="144.0" x2="62.5" y2="149.8" stroke="#e00000"/>
<line x1="62.5" y1="149.8" x2="73.3" y2="155.6" stroke="#d8d8d8"/>
<line x1="87.8" y1="142.7" x2="100.6" y2="140.5" stroke="#e00000"/>
<line x1="100.6" y1="140.5" x2="113.3" y2="138.3" stroke="#c8c8c8"/>
<line x1="87.8" y1="142.7" x2="90.3" y2="149.0" stroke="#e00000"/>
<line x1="90.3" y1="149.0" x2="92.8" y2="155.3" stroke="#d8d8d8"/>
<line x1="60.3" y1="107.7" x2="68.9" y2="106.3" stroke="#c8c8c8"/>
<line x1="68.9" y1="106.3" x2="77.6" y2="105.0" stroke="#c8c8c8"/>
<line x1="128.5" y1="143.8" x2="132.8" y2="130.2" stroke="#d8d8d8"/>
<line x1="132.8" y1="130.2" x2="137.0" y2="116.5" stroke="#c8c8c8"/>
<line x1="195.0" y1="136.9" x2="191.8" y2="135.8" stroke="#c8c8c8"/>
<line x1="191.8" y1="135.8" x2="188.6" y2="134.7" stroke="#d8d8d8"/>
<line x1="147.9" y1="118.3" x2="161.3" y2="126.5" stroke="#b4b4b4"/>
<line x1="145.7" y1="125.0" x2="155.4" y2="131.0" stroke="#b4b4b4"/>
<line x1="132.3" y1="136.9" x2="140.5" y2="140.6" stroke="#b4b4b4"/>
<line x1="133.0" y1="145.0" x2="139.0" y2="148.0" stroke="#b4b4b4"/>
<line x1="187.4" y1="156.3" x2="196.3" y2="162.2" stroke="#b4b4b4"/>
<line x1="89.9" y1="100.2" x2="104.1" y2="100.2" stroke="#c8c8c8"/>
<line x1="95.8" y1="108.5" x2="103.0" y2="108.5" stroke="#c8c8c8"/>
<line x1="89.3" y1="107.5" x2="95.8" y2="108.5" stroke="#e00000"/>
<circle cx="144.5" cy="54.5" r="10.6" fill="url(#gC)"/>
<circle cx="185.3" cy="54.2" r="10.6" fill="url(#gC)"/>
<circle cx="232.3" cy="77.7" r="10.6" fill="url(#gC)"/>
<circle cx="194.0" cy="81.7" r="9.2" fill="url(#gN)"/>
<path d="M190.0 87.5V75.9L198.6 87.5V75.9" fill="none" stroke="#fff" stroke-width="1"/>
<circle cx="85.9" cy="90.3" r="10.6" fill="url(#gC)"/>
<circle cx="127.5" cy="91.5" r="10.6" fill="url(#gC)"/>
<circle cx="129.0" cy="39.3" r="3.6" fill="url(#gH)"/>
<circle cx="141.0" cy="39.1" r="3.6" fill="url(#gH)"/>
<circle cx="193.9" cy="27.0" r="3.6" fill="url(#gH)"/>
<circle cx="201.0" cy="59.2" r="3.6" fill="url(#gH)"/>
<circle cx="233.3" cy="53.6" r="3.6" fill="url(#gH)"/>
<circle cx="251.6" cy="74.7" r="3.6" fill="url(#gH)"/>
<circle cx="239.9" cy="99.9" r="3.6" fill="url(#gH)"/>
<circle cx="78.0" cy="62.3" r="3.6" fill="url(#gH)"/>
<circle cx="60.3" cy="107.7" r="10" fill="url(#gC)"/>
<circle cx="77.6" cy="105.0" r="10.6" fill="url(#gC)"/>
<circle cx="36.7" cy="92.0" r="3.6" fill="url(#gH)"/>
<circle cx="63.2" cy="100.3" r="3.6" fill="url(#gH)"/>
<circle cx="141.8" cy="108.8" r="10.6" fill="url(#gC)"/>
<circle cx="109.3" cy="120.6" r="10.6" fill="url(#gC)"/>
<circle cx="114.4" cy="108.7" r="10.6" fill="url(#gC)"/>
<circle cx="125.3" cy="103.6" r="3.6" fill="url(#gH)"/>
<circle cx="137.0" cy="116.5" r="10.6" fill="url(#gC)"/>
<circle cx="195.0" cy="136.9" r="10.6" fill="url(#gC)"/>
<circle cx="180.6" cy="118.8" r="10.6" fill="url(#gC)"/>
<circle cx="171.0" cy="133.6" r="10.6" fill="url(#gC)"/>
<circle cx="188.6" cy="134.7" r="3.6" fill="url(#gH)"/>
<circle cx="223.6" cy="127.6" r="3.6" fill="url(#gH)"/>
<circle cx="113.3" cy="138.3" r="10.6" fill="url(#gC)"/>
<circle cx="51.7" cy="144.0" r="9.2" fill="url(#gO)"/>
<ellipse cx="51.7" cy="144.0" rx="4.5" ry="5.5" fill="none" stroke="#fff" stroke-width="1"/>
<circle cx="87.8" cy="142.7" r="9.2" fill="url(#gO)"/>
<ellipse cx="87.8" cy="142.7" rx="4.5" ry="5.5" fill="none" stroke="#fff" stroke-width="1"/>
<circle cx="73.3" cy="155.6" r="3.6" fill="url(#gH)"/>
<circle cx="92.8" cy="155.3" r="3.6" fill="url(#gH)"/>
<circle cx="128.5" cy="143.8" r="3.6" fill="url(#gH)"/>
<circle cx="149.1" cy="153.2" r="10.6" fill="url(#gC)"/>
<circle cx="176.0" cy="151.0" r="10.6" fill="url(#gC)"/>
<circle cx="153.0" cy="167.0" r="3.6" fill="url(#gH)"/>
<circle cx="200.3" cy="162.3" r="3.6" fill="url(#gH)"/>
<circle cx="199.2" cy="166.3" r="3.6" fill="url(#gH)"/></svg>
<div style="position:absolute;left:305px;top:279px;width:301px;height:200px;background:#000;"></div>
<div style="position:absolute;left:305px;top:265px;width:301px;height:15px;text-align:center;font:10px 'Liberation Sans',sans-serif;letter-spacing:0.38px;color:#000;white-space:pre;line-height:15px">Frame: 5  Energy: 118.56 kcal/mol MD Step 400.0</div>
<svg style="position:absolute;left:305px;top:279px" width="301" height="200" viewBox="0 0 301 200" stroke-width="2.4"><line x1="145.5" y1="52.9" x2="165.1" y2="52.8" stroke="#c8c8c8"/>
<line x1="165.1" y1="52.8" x2="184.7" y2="52.6" stroke="#c8c8c8"/>
<line x1="145.5" y1="52.9" x2="138.2" y2="46.1" stroke="#c8c8c8"/>
<line x1="138.2" y1="46.1" x2="131.0" y2="39.3" stroke="#d8d8d8"/>
<line x1="145.5" y1="52.9" x2="143.2" y2="46.0" stroke="#c8c8c8"/>
<line x1="143.2" y1="46.0" x2="141.0" y2="39.1" stroke="#d8d8d8"/>
<line x1="184.7" y1="52.6" x2="188.4" y2="39.8" stroke="#c8c8c8"/>
<line x1="188.4" y1="39.8" x2="192.0" y2="27.0" stroke="#d8d8d8"/>
<line x1="184.7" y1="52.6" x2="192.9" y2="55.9" stroke="#c8c8c8"/>
<line x1="192.9" y1="55.9" x2="201.0" y2="59.2" stroke="#d8d8d8"/>
<line x1="184.7" y1="52.6" x2="188.9" y2="66.2" stroke="#c8c8c8"/>
<line x1="188.9" y1="66.2" x2="193.0" y2="79.7" stroke="#8a8ee8"/>
<line x1="193.0" y1="79.7" x2="212.2" y2="78.0" stroke="#8a8ee8"/>
<line x1="212.2" y1="78.0" x2="231.3" y2="76.2" stroke="#c8c8c8"/>
<line x1="231.3" y1="76.2" x2="232.0" y2="64.1" stroke="#c8c8c8"/>
<line x1="232.0" y1="64.1" x2="232.7" y2="52.0" stroke="#d8d8d8"/>
<line x1="231.3" y1="76.2" x2="242.1" y2="75.2" stroke="#c8c8c8"/>
<line x1="242.1" y1="75.2" x2="252.9" y2="74.1" stroke="#d8d8d8"/>
<line x1="231.3" y1="76.2" x2="235.2" y2="87.1" stroke="#c8c8c8"/>
<line x1="235.2" y1="87.1" x2="239.2" y2="98.0" stroke="#d8d8d8"/>
<line x1="145.5" y1="52.9" x2="137.3" y2="72.2" stroke="#c8c8c8"/>
<line x1="137.3" y1="72.2" x2="129.1" y2="91.5" stroke="#c8c8c8"/>
<line x1="193.0" y1="79.7" x2="186.0" y2="98.6" stroke="#8a8ee8"/>
<line x1="186.0" y1="98.6" x2="179.0" y2="117.5" stroke="#c8c8c8"/>
<line x1="179.0" y1="117.5" x2="158.0" y2="117.0" stroke="#c8c8c8"/>
<line x1="158.0" y1="117.0" x2="137.0" y2="116.5" stroke="#c8c8c8"/>
<line x1="179.0" y1="117.5" x2="186.2" y2="126.9" stroke="#c8c8c8"/>
<line x1="186.2" y1="126.9" x2="193.4" y2="136.3" stroke="#c8c8c8"/>
<line x1="193.4" y1="136.3" x2="207.4" y2="129.9" stroke="#c8c8c8"/>
<line x1="207.4" y1="129.9" x2="221.4" y2="123.5" stroke="#d8d8d8"/>
<line x1="193.4" y1="136.3" x2="196.9" y2="149.3" stroke="#c8c8c8"/>
<line x1="196.9" y1="149.3" x2="200.3" y2="162.3" stroke="#d8d8d8"/>
<line x1="148.5" y1="150.6" x2="162.2" y2="149.6" stroke="#c8c8c8"/>
<line x1="162.2" y1="149.6" x2="176.0" y2="148.5" stroke="#c8c8c8"/>
<line x1="148.5" y1="150.6" x2="150.8" y2="158.8" stroke="#c8c8c8"/>
<line x1="150.8" y1="158.8" x2="153.0" y2="167.0" stroke="#d8d8d8"/>
<line x1="87.5" y1="88.1" x2="82.8" y2="74.7" stroke="#c8c8c8"/>
<line x1="82.8" y1="74.7" x2="78.0" y2="61.3" stroke="#d8d8d8"/>
<line x1="87.5" y1="88.1" x2="108.3" y2="89.8" stroke="#c8c8c8"/>
<line x1="108.3" y1="89.8" x2="129.1" y2="91.5" stroke="#c8c8c8"/>
<line x1="62.8" y1="105.5" x2="50.2" y2="97.7" stroke="#c8c8c8"/>
<line x1="50.2" y1="97.7" x2="37.7" y2="89.8" stroke="#d8d8d8"/>
<line x1="62.8" y1="105.5" x2="57.9" y2="124.0" stroke="#c8c8c8"/>
<line x1="57.9" y1="124.0" x2="53.0" y2="142.4" stroke="#e00000"/>
<line x1="53.0" y1="142.4" x2="63.1" y2="148.2" stroke="#e00000"/>
<line x1="63.1" y1="148.2" x2="73.3" y2="154.0" stroke="#d8d8d8"/>
<line x1="89.4" y1="141.2" x2="102.2" y2="138.1" stroke="#e00000"/>
<line x1="102.2" y1="138.1" x2="114.9" y2="135.1" stroke="#c8c8c8"/>
<line x1="89.4" y1="141.2" x2="91.7" y2="146.6" stroke="#e00000"/>
<line x1="91.7" y1="146.6" x2="94.0" y2="152.1" stroke="#d8d8d8"/>
<line x1="62.8" y1="105.5" x2="71.3" y2="104.2" stroke="#c8c8c8"/>
<line x1="71.3" y1="104.2" x2="79.8" y2="102.8" stroke="#c8c8c8"/>
<line x1="128.5" y1="142.2" x2="132.8" y2="129.4" stroke="#d8d8d8"/>
<line x1="132.8" y1="129.4" x2="137.0" y2="116.5" stroke="#c8c8c8"/>
<line x1="193.4" y1="136.3" x2="190.2" y2="134.4" stroke="#c8c8c8"/>
<line x1="190.2" y1="134.4" x2="187.0" y2="132.5" stroke="#d8d8d8"/>
<line x1="147.9" y1="118.3" x2="161.3" y2="126.5" stroke="#b4b4b4"/>
<line x1="145.7" y1="125.0" x2="155.4" y2="131.0" stroke="#b4b4b4"/>
<line x1="132.3" y1="136.9" x2="140.5" y2="140.6" stroke="#b4b4b4"/>
<line x1="133.0" y1="145.0" x2="139.0" y2="148.0" stroke="#b4b4b4"/>
<line x1="187.4" y1="156.3" x2="196.3" y2="162.2" stroke="#b4b4b4"/>
<line x1="89.9" y1="100.2" x2="104.1" y2="100.2" stroke="#c8c8c8"/>
<line x1="95.8" y1="108.5" x2="103.0" y2="108.5" stroke="#c8c8c8"/>
<line x1="89.3" y1="107.5" x2="95.8" y2="108.5" stroke="#e00000"/>
<circle cx="145.5" cy="52.9" r="10.6" fill="url(#gC)"/>
<circle cx="184.7" cy="52.6" r="10.6" fill="url(#gC)"/>
<circle cx="231.3" cy="76.2" r="10.6" fill="url(#gC)"/>
<circle cx="193.0" cy="79.7" r="9.2" fill="url(#gN)"/>
<path d="M189.0 85.5V73.9L197.6 85.5V73.9" fill="none" stroke="#fff" stroke-width="1"/>
<circle cx="87.5" cy="88.1" r="10.6" fill="url(#gC)"/>
<circle cx="129.1" cy="91.5" r="10.6" fill="url(#gC)"/>
<circle cx="131.0" cy="39.3" r="3.6" fill="url(#gH)"/>
<circle cx="141.0" cy="39.1" r="3.6" fill="url(#gH)"/>
<circle cx="192.0" cy="27.0" r="3.6" fill="url(#gH)"/>
<circle cx="201.0" cy="59.2" r="3.6" fill="url(#gH)"/>
<circle cx="232.7" cy="52.0" r="3.6" fill="url(#gH)"/>
<circle cx="252.9" cy="74.1" r="3.6" fill="url(#gH)"/>
<circle cx="239.2" cy="98.0" r="3.6" fill="url(#gH)"/>
<circle cx="78.0" cy="61.3" r="3.6" fill="url(#gH)"/>
<circle cx="62.8" cy="105.5" r="10" fill="url(#gC)"/>
<circle cx="79.8" cy="102.8" r="10.6" fill="url(#gC)"/>
<circle cx="37.7" cy="89.8" r="3.6" fill="url(#gH)"/>
<circle cx="64.8" cy="97.1" r="3.6" fill="url(#gH)"/>
<circle cx="141.8" cy="108.8" r="10.6" fill="url(#gC)"/>
<circle cx="110.3" cy="119.0" r="10.6" fill="url(#gC)"/>
<circle cx="114.4" cy="106.5" r="10.6" fill="url(#gC)"/>
<circle cx="124.7" cy="108.4" r="3.6" fill="url(#gH)"/>
<circle cx="137.0" cy="116.5" r="10.6" fill="url(#gC)"/>
<circle cx="193.4" cy="136.3" r="10.6" fill="url(#gC)"/>
<circle cx="179.0" cy="117.5" r="10.6" fill="url(#gC)"/>
<circle cx="171.0" cy="132.0" r="10.6" fill="url(#gC)"/>
<circle cx="187.0" cy="132.5" r="3.6" fill="url(#gH)"/>
<circle cx="221.4" cy="123.5" r="3.6" fill="url(#gH)"/>
<circle cx="114.9" cy="135.1" r="10.6" fill="url(#gC)"/>
<circle cx="53.0" cy="142.4" r="9.2" fill="url(#gO)"/>
<ellipse cx="53.0" cy="142.4" rx="4.5" ry="5.5" fill="none" stroke="#fff" stroke-width="1"/>
<circle cx="89.4" cy="141.2" r="9.2" fill="url(#gO)"/>
<ellipse cx="89.4" cy="141.2" rx="4.5" ry="5.5" fill="none" stroke="#fff" stroke-width="1"/>
<circle cx="73.3" cy="154.0" r="3.6" fill="url(#gH)"/>
<circle cx="94.0" cy="152.1" r="3.6" fill="url(#gH)"/>
<circle cx="128.5" cy="142.2" r="3.6" fill="url(#gH)"/>
<circle cx="148.5" cy="150.6" r="10.6" fill="url(#gC)"/>
<circle cx="176.0" cy="148.5" r="10.6" fill="url(#gC)"/>
<circle cx="153.0" cy="167.0" r="3.6" fill="url(#gH)"/>
<circle cx="200.3" cy="162.3" r="3.6" fill="url(#gH)"/>
<circle cx="199.2" cy="166.3" r="3.6" fill="url(#gH)"/></svg>
<div style="position:absolute;left:607px;top:279px;width:301px;height:200px;background:#000;"></div>
<div style="position:absolute;left:607px;top:265px;width:301px;height:15px;text-align:center;font:10px 'Liberation Sans',sans-serif;letter-spacing:0.38px;color:#000;white-space:pre;line-height:15px">Frame: 6  Energy: 118.56 kcal/mol MD Step 500.0</div>
<svg style="position:absolute;left:607px;top:279px" width="301" height="200" viewBox="0 0 301 200" stroke-width="2.4"><line x1="144.5" y1="54.5" x2="164.6" y2="55.2" stroke="#c8c8c8"/>
<line x1="164.6" y1="55.2" x2="184.7" y2="55.8" stroke="#c8c8c8"/>
<line x1="144.5" y1="54.5" x2="138.1" y2="48.1" stroke="#c8c8c8"/>
<line x1="138.1" y1="48.1" x2="131.6" y2="41.8" stroke="#d8d8d8"/>
<line x1="144.5" y1="54.5" x2="142.8" y2="47.3" stroke="#c8c8c8"/>
<line x1="142.8" y1="47.3" x2="141.0" y2="40.1" stroke="#d8d8d8"/>
<line x1="184.7" y1="55.8" x2="188.9" y2="42.5" stroke="#c8c8c8"/>
<line x1="188.9" y1="42.5" x2="193.0" y2="29.2" stroke="#d8d8d8"/>
<line x1="184.7" y1="55.8" x2="191.6" y2="59.1" stroke="#c8c8c8"/>
<line x1="191.6" y1="59.1" x2="198.5" y2="62.4" stroke="#d8d8d8"/>
<line x1="184.7" y1="55.8" x2="188.9" y2="69.4" stroke="#c8c8c8"/>
<line x1="188.9" y1="69.4" x2="193.0" y2="82.9" stroke="#8a8ee8"/>
<line x1="193.0" y1="82.9" x2="211.4" y2="81.1" stroke="#8a8ee8"/>
<line x1="211.4" y1="81.1" x2="229.7" y2="79.3" stroke="#c8c8c8"/>
<line x1="229.7" y1="79.3" x2="231.5" y2="66.5" stroke="#c8c8c8"/>
<line x1="231.5" y1="66.5" x2="233.3" y2="53.6" stroke="#d8d8d8"/>
<line x1="229.7" y1="79.3" x2="239.1" y2="79.8" stroke="#c8c8c8"/>
<line x1="239.1" y1="79.8" x2="248.4" y2="80.4" stroke="#d8d8d8"/>
<line x1="229.7" y1="79.3" x2="232.4" y2="90.2" stroke="#c8c8c8"/>
<line x1="232.4" y1="90.2" x2="235.1" y2="101.2" stroke="#d8d8d8"/>
<line x1="144.5" y1="54.5" x2="136.0" y2="73.0" stroke="#c8c8c8"/>
<line x1="136.0" y1="73.0" x2="127.5" y2="91.5" stroke="#c8c8c8"/>
<line x1="193.0" y1="82.9" x2="185.5" y2="100.8" stroke="#8a8ee8"/>
<line x1="185.5" y1="100.8" x2="178.0" y2="118.8" stroke="#c8c8c8"/>
<line x1="178.0" y1="118.8" x2="157.5" y2="117.7" stroke="#c8c8c8"/>
<line x1="157.5" y1="117.7" x2="137.0" y2="116.5" stroke="#c8c8c8"/>
<line x1="178.0" y1="118.8" x2="185.7" y2="128.2" stroke="#c8c8c8"/>
<line x1="185.7" y1="128.2" x2="193.4" y2="137.6" stroke="#c8c8c8"/>
<line x1="193.4" y1="137.6" x2="206.9" y2="132.2" stroke="#c8c8c8"/>
<line x1="206.9" y1="132.2" x2="220.4" y2="126.7" stroke="#d8d8d8"/>
<line x1="193.4" y1="137.6" x2="196.9" y2="149.9" stroke="#c8c8c8"/>
<line x1="196.9" y1="149.9" x2="200.3" y2="162.3" stroke="#d8d8d8"/>
<line x1="148.5" y1="152.2" x2="162.2" y2="151.6" stroke="#c8c8c8"/>
<line x1="162.2" y1="151.6" x2="176.0" y2="151.0" stroke="#c8c8c8"/>
<line x1="148.5" y1="152.2" x2="149.9" y2="158.5" stroke="#c8c8c8"/>
<line x1="149.9" y1="158.5" x2="151.4" y2="164.8" stroke="#d8d8d8"/>
<line x1="87.5" y1="90.3" x2="83.5" y2="76.8" stroke="#c8c8c8"/>
<line x1="83.5" y1="76.8" x2="79.6" y2="63.2" stroke="#d8d8d8"/>
<line x1="87.5" y1="90.3" x2="107.5" y2="90.9" stroke="#c8c8c8"/>
<line x1="107.5" y1="90.9" x2="127.5" y2="91.5" stroke="#c8c8c8"/>
<line x1="62.8" y1="106.8" x2="50.5" y2="99.4" stroke="#c8c8c8"/>
<line x1="50.5" y1="99.4" x2="38.3" y2="92.0" stroke="#d8d8d8"/>
<line x1="62.8" y1="106.8" x2="57.9" y2="125.7" stroke="#c8c8c8"/>
<line x1="57.9" y1="125.7" x2="53.0" y2="144.6" stroke="#e00000"/>
<line x1="53.0" y1="144.6" x2="63.1" y2="150.4" stroke="#e00000"/>
<line x1="63.1" y1="150.4" x2="73.3" y2="156.2" stroke="#d8d8d8"/>
<line x1="90.4" y1="142.7" x2="101.9" y2="140.5" stroke="#e00000"/>
<line x1="101.9" y1="140.5" x2="113.3" y2="138.3" stroke="#c8c8c8"/>
<line x1="90.4" y1="142.7" x2="92.7" y2="148.2" stroke="#e00000"/>
<line x1="92.7" y1="148.2" x2="95.0" y2="153.7" stroke="#d8d8d8"/>
<line x1="62.8" y1="106.8" x2="71.8" y2="105.1" stroke="#c8c8c8"/>
<line x1="71.8" y1="105.1" x2="80.8" y2="103.4" stroke="#c8c8c8"/>
<line x1="130.1" y1="144.8" x2="133.6" y2="130.7" stroke="#d8d8d8"/>
<line x1="133.6" y1="130.7" x2="137.0" y2="116.5" stroke="#c8c8c8"/>
<line x1="193.4" y1="137.6" x2="189.4" y2="137.4" stroke="#c8c8c8"/>
<line x1="189.4" y1="137.4" x2="185.4" y2="137.2" stroke="#d8d8d8"/>
<line x1="147.9" y1="118.3" x2="161.3" y2="126.5" stroke="#b4b4b4"/>
<line x1="145.7" y1="125.0" x2="155.4" y2="131.0" stroke="#b4b4b4"/>
<line x1="132.3" y1="136.9" x2="140.5" y2="140.6" stroke="#b4b4b4"/>
<line x1="133.0" y1="145.0" x2="139.0" y2="148.0" stroke="#b4b4b4"/>
<line x1="187.4" y1="156.3" x2="196.3" y2="162.2" stroke="#b4b4b4"/>
<line x1="89.9" y1="100.2" x2="104.1" y2="100.2" stroke="#c8c8c8"/>
<line x1="95.8" y1="108.5" x2="103.0" y2="108.5" stroke="#c8c8c8"/>
<line x1="89.3" y1="107.5" x2="95.8" y2="108.5" stroke="#e00000"/>
<circle cx="144.5" cy="54.5" r="10.6" fill="url(#gC)"/>
<circle cx="184.7" cy="55.8" r="10.6" fill="url(#gC)"/>
<circle cx="229.7" cy="79.3" r="10.6" fill="url(#gC)"/>
<circle cx="193.0" cy="82.9" r="9.2" fill="url(#gN)"/>
<path d="M189.0 88.7V77.1L197.6 88.7V77.1" fill="none" stroke="#fff" stroke-width="1"/>
<circle cx="87.5" cy="90.3" r="10.6" fill="url(#gC)"/>
<circle cx="127.5" cy="91.5" r="10.6" fill="url(#gC)"/>
<circle cx="131.6" cy="41.8" r="3.6" fill="url(#gH)"/>
<circle cx="141.0" cy="40.1" r="3.6" fill="url(#gH)"/>
<circle cx="193.0" cy="29.2" r="3.6" fill="url(#gH)"/>
<circle cx="198.5" cy="62.4" r="3.6" fill="url(#gH)"/>
<circle cx="233.3" cy="53.6" r="3.6" fill="url(#gH)"/>
<circle cx="248.4" cy="80.4" r="3.6" fill="url(#gH)"/>
<circle cx="235.1" cy="101.2" r="3.6" fill="url(#gH)"/>
<circle cx="79.6" cy="63.2" r="3.6" fill="url(#gH)"/>
<circle cx="62.8" cy="106.8" r="10" fill="url(#gC)"/>
<circle cx="80.8" cy="103.4" r="10.6" fill="url(#gC)"/>
<circle cx="38.3" cy="92.0" r="3.6" fill="url(#gH)"/>
<circle cx="65.8" cy="98.0" r="3.6" fill="url(#gH)"/>
<circle cx="141.8" cy="108.8" r="10.6" fill="url(#gC)"/>
<circle cx="110.3" cy="122.2" r="10.6" fill="url(#gC)"/>
<circle cx="115.0" cy="109.0" r="10.6" fill="url(#gC)"/>
<circle cx="126.3" cy="106.1" r="3.6" fill="url(#gH)"/>
<circle cx="137.0" cy="116.5" r="10.6" fill="url(#gC)"/>
<circle cx="193.4" cy="137.6" r="10.6" fill="url(#gC)"/>
<circle cx="178.0" cy="118.8" r="10.6" fill="url(#gC)"/>
<circle cx="171.0" cy="133.6" r="10.6" fill="url(#gC)"/>
<circle cx="185.4" cy="137.2" r="3.6" fill="url(#gH)"/>
<circle cx="220.4" cy="126.7" r="3.6" fill="url(#gH)"/>
<circle cx="113.3" cy="138.3" r="10.6" fill="url(#gC)"/>
<circle cx="53.0" cy="144.6" r="9.2" fill="url(#gO)"/>
<ellipse cx="53.0" cy="144.6" rx="4.5" ry="5.5" fill="none" stroke="#fff" stroke-width="1"/>
<circle cx="90.4" cy="142.7" r="9.2" fill="url(#gO)"/>
<ellipse cx="90.4" cy="142.7" rx="4.5" ry="5.5" fill="none" stroke="#fff" stroke-width="1"/>
<circle cx="73.3" cy="156.2" r="3.6" fill="url(#gH)"/>
<circle cx="95.0" cy="153.7" r="3.6" fill="url(#gH)"/>
<circle cx="130.1" cy="144.8" r="3.6" fill="url(#gH)"/>
<circle cx="148.5" cy="152.2" r="10.6" fill="url(#gC)"/>
<circle cx="176.0" cy="151.0" r="10.6" fill="url(#gC)"/>
<circle cx="151.4" cy="164.8" r="3.6" fill="url(#gH)"/>
<circle cx="200.3" cy="162.3" r="3.6" fill="url(#gH)"/>
<circle cx="199.2" cy="166.3" r="3.6" fill="url(#gH)"/></svg>
<div style="position:absolute;left:3px;top:63px;width:301px;height:1px;background:#f0f0f0;"></div>
<div style="position:absolute;left:303px;top:50px;width:1px;height:14px;background:#ececec;"></div>
<div style="position:absolute;left:305px;top:63px;width:301px;height:1px;background:#f0f0f0;"></div>
<div style="position:absolute;left:605px;top:50px;width:1px;height:14px;background:#ececec;"></div>
<div style="position:absolute;left:305px;top:50px;width:1px;height:14px;background:#ececec;"></div>
<div style="position:absolute;left:607px;top:63px;width:301px;height:1px;background:#f0f0f0;"></div>
<div style="position:absolute;left:907px;top:50px;width:1px;height:14px;background:#ececec;"></div>
<div style="position:absolute;left:607px;top:50px;width:1px;height:14px;background:#ececec;"></div>
<div style="position:absolute;left:3px;top:278px;width:301px;height:1px;background:#f0f0f0;"></div>
<div style="position:absolute;left:303px;top:264px;width:1px;height:15px;background:#ececec;"></div>
<div style="position:absolute;left:305px;top:278px;width:301px;height:1px;background:#f0f0f0;"></div>
<div style="position:absolute;left:605px;top:264px;width:1px;height:15px;background:#ececec;"></div>
<div style="position:absolute;left:305px;top:264px;width:1px;height:15px;background:#ececec;"></div>
<div style="position:absolute;left:607px;top:278px;width:301px;height:1px;background:#f0f0f0;"></div>
<div style="position:absolute;left:907px;top:264px;width:1px;height:15px;background:#ececec;"></div>
<div style="position:absolute;left:607px;top:264px;width:1px;height:15px;background:#ececec;"></div>
<div style="position:absolute;left:304px;top:50px;width:1px;height:429px;background:#8c8c8c;"></div>
<div style="position:absolute;left:606px;top:50px;width:1px;height:429px;background:#8c8c8c;"></div>
<div style="position:absolute;left:908px;top:50px;width:16px;height:429px;background:#e0e0e0;"></div>
<div style="position:absolute;left:908px;top:50px;width:1px;height:429px;background:#8c8c8c;"></div>
<div style="position:absolute;left:923px;top:50px;width:1px;height:429px;background:#8c8c8c;"></div>
<div style="position:absolute;left:924px;top:50px;width:1px;height:429px;background:#fff;"></div>
<div style="position:absolute;left:909px;top:50px;width:14px;height:15px;background:linear-gradient(#f0f0f0,#d8d8d8);"></div>
<div style="position:absolute;left:909px;top:51px;width:14px;height:1px;background:#fff;"></div>
<div style="position:absolute;left:909px;top:51px;width:1px;height:14px;background:#fff;"></div>
<svg style="position:absolute;left:913px;top:56px" width="8" height="4"><path d="M0 4L4 0L8 4Z" fill="#000"/></svg>
<div style="position:absolute;left:908px;top:65px;width:16px;height:199px;background:linear-gradient(to right,#7d97c9,#5675b0);box-sizing:border-box;border:1px solid #23428a"></div>
<div style="position:absolute;left:909px;top:66px;width:1px;height:197px;background:#a9c6f5;"></div>
<div style="position:absolute;left:909px;top:66px;width:14px;height:1px;background:#a9c6f5;"></div>
<svg style="position:absolute;left:908px;top:65px" width="16" height="199"><rect x="4" y="86" width="1" height="1" fill="#2b4a8a"/><rect x="3" y="85" width="1" height="1" fill="#e8f0ff"/><rect x="8" y="86" width="1" height="1" fill="#2b4a8a"/><rect x="7" y="85" width="1" height="1" fill="#e8f0ff"/><rect x="12" y="86" width="1" height="1" fill="#2b4a8a"/><rect x="11" y="85" width="1" height="1" fill="#e8f0ff"/><rect x="6" y="88" width="1" height="1" fill="#2b4a8a"/><rect x="5" y="87" width="1" height="1" fill="#e8f0ff"/><rect x="10" y="88" width="1" height="1" fill="#2b4a8a"/><rect x="9" y="87" width="1" height="1" fill="#e8f0ff"/><rect x="4" y="90" width="1" height="1" fill="#2b4a8a"/><rect x="3" y="89" width="1" height="1" fill="#e8f0ff"/><rect x="8" y="90" width="1" height="1" fill="#2b4a8a"/><rect x="7" y="89" width="1" height="1" fill="#e8f0ff"/><rect x="12" y="90" width="1" height="1" fill="#2b4a8a"/><rect x="11" y="89" width="1" height="1" fill="#e8f0ff"/><rect x="6" y="92" width="1" height="1" fill="#2b4a8a"/><rect x="5" y="91" width="1" height="1" fill="#e8f0ff"/><rect x="10" y="92" width="1" height="1" fill="#2b4a8a"/><rect x="9" y="91" width="1" height="1" fill="#e8f0ff"/><rect x="4" y="94" width="1" height="1" fill="#2b4a8a"/><rect x="3" y="93" width="1" height="1" fill="#e8f0ff"/><rect x="8" y="94" width="1" height="1" fill="#2b4a8a"/><rect x="7" y="93" width="1" height="1" fill="#e8f0ff"/><rect x="12" y="94" width="1" height="1" fill="#2b4a8a"/><rect x="11" y="93" width="1" height="1" fill="#e8f0ff"/><rect x="6" y="96" width="1" height="1" fill="#2b4a8a"/><rect x="5" y="95" width="1" height="1" fill="#e8f0ff"/><rect x="10" y="96" width="1" height="1" fill="#2b4a8a"/><rect x="9" y="95" width="1" height="1" fill="#e8f0ff"/><rect x="4" y="98" width="1" height="1" fill="#2b4a8a"/><rect x="3" y="97" width="1" height="1" fill="#e8f0ff"/><rect x="8" y="98" width="1" height="1" fill="#2b4a8a"/><rect x="7" y="97" width="1" height="1" fill="#e8f0ff"/><rect x="12" y="98" width="1" height="1" fill="#2b4a8a"/><rect x="11" y="97" width="1" height="1" fill="#e8f0ff"/><rect x="6" y="100" width="1" height="1" fill="#2b4a8a"/><rect x="5" y="99" width="1" height="1" fill="#e8f0ff"/><rect x="10" y="100" width="1" height="1" fill="#2b4a8a"/><rect x="9" y="99" width="1" height="1" fill="#e8f0ff"/><rect x="4" y="102" width="1" height="1" fill="#2b4a8a"/><rect x="3" y="101" width="1" height="1" fill="#e8f0ff"/><rect x="8" y="102" width="1" height="1" fill="#2b4a8a"/><rect x="7" y="101" width="1" height="1" fill="#e8f0ff"/><rect x="12" y="102" width="1" height="1" fill="#2b4a8a"/><rect x="11" y="101" width="1" height="1" fill="#e8f0ff"/><rect x="6" y="104" width="1" height="1" fill="#2b4a8a"/><rect x="5" y="103" width="1" height="1" fill="#e8f0ff"/><rect x="10" y="104" width="1" height="1" fill="#2b4a8a"/><rect x="9" y="103" width="1" height="1" fill="#e8f0ff"/><rect x="4" y="106" width="1" height="1" fill="#2b4a8a"/><rect x="3" y="105" width="1" height="1" fill="#e8f0ff"/><rect x="8" y="106" width="1" height="1" fill="#2b4a8a"/><rect x="7" y="105" width="1" height="1" fill="#e8f0ff"/><rect x="12" y="106" width="1" height="1" fill="#2b4a8a"/><rect x="11" y="105" width="1" height="1" fill="#e8f0ff"/><rect x="6" y="108" width="1" height="1" fill="#2b4a8a"/><rect x="5" y="107" width="1" height="1" fill="#e8f0ff"/><rect x="10" y="108" width="1" height="1" fill="#2b4a8a"/><rect x="9" y="107" width="1" height="1" fill="#e8f0ff"/><rect x="4" y="110" width="1" height="1" fill="#2b4a8a"/><rect x="3" y="109" width="1" height="1" fill="#e8f0ff"/><rect x="8" y="110" width="1" height="1" fill="#2b4a8a"/><rect x="7" y="109" width="1" height="1" fill="#e8f0ff"/><rect x="12" y="110" width="1" height="1" fill="#2b4a8a"/><rect x="11" y="109" width="1" height="1" fill="#e8f0ff"/><rect x="6" y="112" width="1" height="1" fill="#2b4a8a"/><rect x="5" y="111" width="1" height="1" fill="#e8f0ff"/><rect x="10" y="112" width="1" height="1" fill="#2b4a8a"/><rect x="9" y="111" width="1" height="1" fill="#e8f0ff"/><rect x="4" y="114" width="1" height="1" fill="#2b4a8a"/><rect x="3" y="113" width="1" height="1" fill="#e8f0ff"/><rect x="8" y="114" width="1" height="1" fill="#2b4a8a"/><rect x="7" y="113" width="1" height="1" fill="#e8f0ff"/><rect x="12" y="114" width="1" height="1" fill="#2b4a8a"/><rect x="11" y="113" width="1" height="1" fill="#e8f0ff"/></svg>
<div style="position:absolute;left:908px;top:462px;width:16px;height:16px;background:linear-gradient(#f0f0f0,#d8d8d8);box-sizing:border-box;border:1px solid #8c8c8c"></div>
<div style="position:absolute;left:909px;top:463px;width:14px;height:1px;background:#fff;"></div>
<div style="position:absolute;left:909px;top:463px;width:1px;height:14px;background:#fff;"></div>
<svg style="position:absolute;left:913px;top:469px" width="8" height="4"><path d="M0 0L8 0L4 4Z" fill="#000"/></svg>
<div style="position:absolute;left:908px;top:478px;width:17px;height:1px;background:#fff;"></div>
<div style="position:absolute;left:3px;top:479px;width:923px;height:21px;background:linear-gradient(#f4f4f4,#d6d6d6);box-sizing:border-box;border:1px solid #6e6e6e;border-radius:2px"></div>
<div style="position:absolute;left:4px;top:480px;width:921px;height:1px;background:#fff;"></div>
<div style="position:absolute;left:4px;top:480px;width:1px;height:19px;background:#fff;"></div>
<div style="position:absolute;left:3px;top:479px;width:923px;height:21px;text-align:center;font:11px 'Liberation Sans',sans-serif;line-height:21px;color:#000">Select</div>
</body></html>
